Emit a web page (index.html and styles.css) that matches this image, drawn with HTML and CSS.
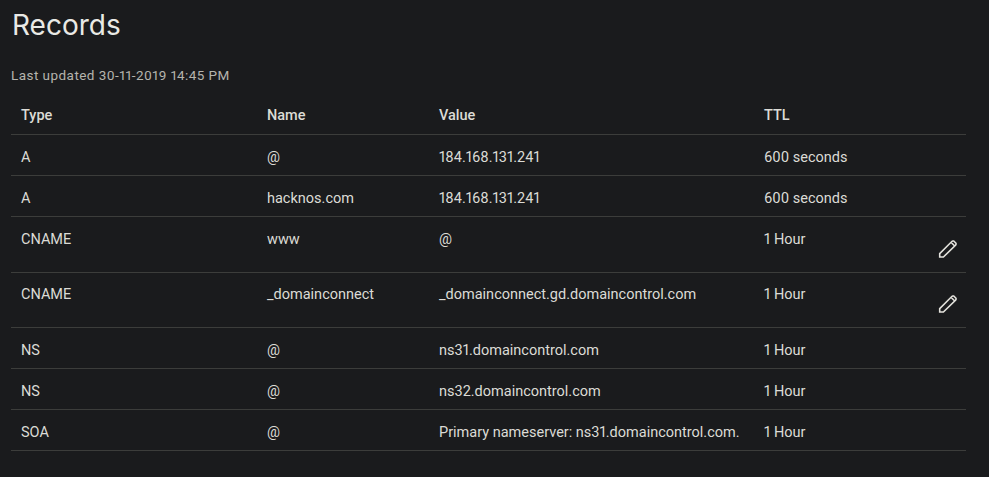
FILE: index.html
```html
<!DOCTYPE html>
<html lang="en">
<head>
<meta charset="utf-8">
<title>Records</title>
<link rel="stylesheet" href="styles.css">
</head>
<body>
<main class="page">
  <h1 class="title">Records</h1>
  <p class="updated">Last updated 30-11-2019 14:45 PM</p>
  <table class="records">
    <colgroup>
      <col class="col-type"><col class="col-name"><col class="col-value"><col class="col-ttl"><col class="col-action">
    </colgroup>
    <thead>
      <tr><th>Type</th><th>Name</th><th>Value</th><th>TTL</th><th></th></tr>
    </thead>
    <tbody>
      <tr><td>A</td><td>@</td><td>184.168.131.241</td><td>600 seconds</td><td></td></tr>
      <tr><td>A</td><td>hacknos.com</td><td>184.168.131.241</td><td>600 seconds</td><td></td></tr>
      <tr class="editable">
        <td>CNAME</td><td>www</td><td>@</td><td>1 Hour</td>
        <td class="action"><svg class="pencil" viewBox="0 0 20 20" aria-hidden="true"><path d="M1.7 18v-3.4L14 2.3l.7-.3h1l2.300 2.300v1l-.3.7L5.400 18zM13 3.300l3.700 3.700"/></svg></td>
      </tr>
      <tr class="editable tall">
        <td>CNAME</td><td>_domainconnect</td><td>_domainconnect.gd.domaincontrol.com</td><td>1 Hour</td>
        <td class="action"><svg class="pencil" viewBox="0 0 20 20" aria-hidden="true"><path d="M1.7 18v-3.4L14 2.3l.7-.3h1l2.300 2.300v1l-.3.7L5.400 18zM13 3.300l3.700 3.700"/></svg></td>
      </tr>
      <tr><td>NS</td><td>@</td><td>ns31.domaincontrol.com</td><td>1 Hour</td><td></td></tr>
      <tr><td>NS</td><td>@</td><td>ns32.domaincontrol.com</td><td>1 Hour</td><td></td></tr>
      <tr><td>SOA</td><td>@</td><td>Primary nameserver: ns31.domaincontrol.com.</td><td>1 Hour</td><td></td></tr>
    </tbody>
  </table>
</main>
</body>
</html>
```

FILE: styles.css
```css
html, body {
  margin: 0;
  padding: 0;
  background: #1a1b1d;
}
body {
  height: 477px;
  overflow: hidden;
  font-family: Roboto, "Liberation Sans", sans-serif;
  font-variant-numeric: proportional-nums;
  color: #dcdbd6;
}
.page {
  padding: 0 23px 0 11px;
}
.title {
  margin: 0;
  padding: 7px 0 0 1px;
  font-family: Inter, sans-serif;
  font-size: 28px;
  line-height: 36px;
  font-weight: 400;
  color: #e9e9e5;
}
.updated {
  margin: 0;
  padding-top: 23px;
  font-size: 13.5px;
  letter-spacing: 0.45px;
  line-height: 18px;
  color: #b5b4ad;
}
.records {
  width: 955px;
  margin-top: 11px;
  border-collapse: collapse;
  table-layout: fixed;
  font-size: 14.5px;
}
.col-type { width: 246px; }
.col-name { width: 172px; }
.col-value { width: 325px; }
.col-ttl { width: 160px; }
.col-action { width: 52px; }
th, td {
  padding: 0 10px;
  text-align: left;
  vertical-align: top;
  border-bottom: 1px solid #3c3d3b;
  white-space: nowrap;
}
th {
  height: 39px;
  padding-top: 12px;
  box-sizing: border-box;
  line-height: 18px;
  font-weight: 500;
}
td {
  height: 41px;
  box-sizing: border-box;
  padding-top: 14px;
  line-height: 18px;
}
.editable td { height: 56px; }
.editable.tall td {
  height: 55px;
  padding-top: 13px;
}
.editable .action {
  padding: 22px 8px 0 0;
  text-align: right;
}
.editable.tall .action {
  padding-top: 21px;
}
.pencil {
  display: block;
  width: 20px;
  height: 20px;
  margin-left: auto;
  fill: none;
  stroke: #e3e2dc;
  stroke-width: 1.6;
  stroke-linejoin: miter;
}
```
